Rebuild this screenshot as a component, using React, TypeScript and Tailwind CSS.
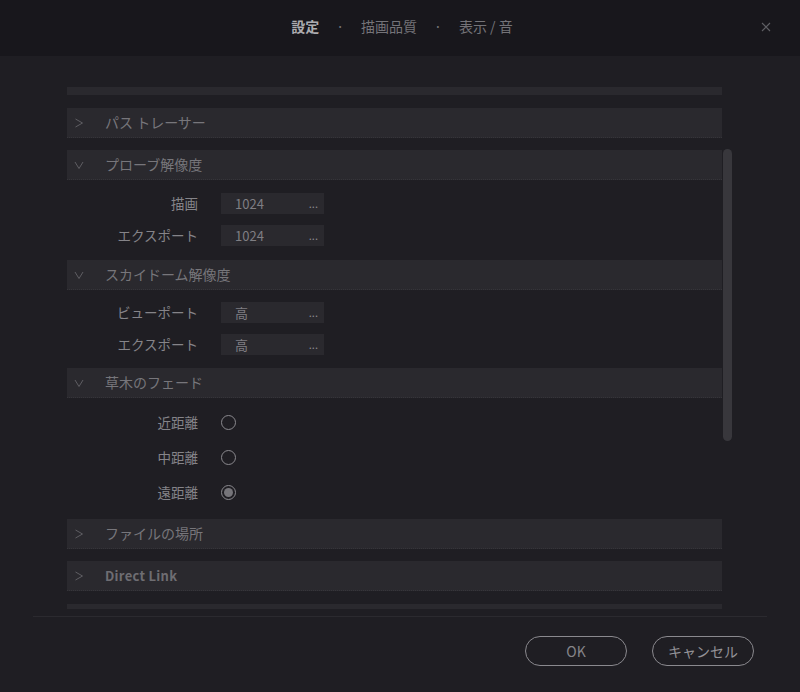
const font = { fontFamily: '"Noto Sans CJK JP", "Noto Sans", sans-serif' };

type Row = { label: string; value: string };

const Chevron = ({ open }: { open?: boolean }) => (
  <svg width="10" height="10" viewBox="0 0 10 10" className="ml-[7px] mr-[21px]">
    {open ? (
      <path d="M1 2L5 8.5L9 2" fill="none" stroke="#5f5e63" strokeWidth="1" />
    ) : (
      <path d="M1.5 1L8.5 5L1.5 9" fill="none" stroke="#5f5e63" strokeWidth="1" />
    )}
  </svg>
);

const SectionHeader = ({ title, open, bold }: { title: string; open?: boolean; bold?: boolean }) => (
  <div className="flex items-center h-[30px] w-[655px] bg-[#2a292e] border-b border-dotted border-[#36353a]">
    <Chevron open={open} />
    <span
      className={
        bold
          ? "text-[13px] font-bold text-[#6e6d72] tracking-[0.3px]"
          : "text-[14px] text-[#77767b]"
      }
    >
      {title}
    </span>
  </div>
);

const InputRows = ({ rows }: { rows: Row[] }) => (
  <div className="flex flex-col gap-[11px] mt-[13px]">
    {rows.map((r, i) => (
      <div key={i} className="flex items-center h-[21px]">
        <span className="w-[131px] text-right text-[13.5px] text-[#858489]">{r.label}</span>
        <div className="ml-[23px] w-[103px] h-[21px] bg-[#2a292e] flex items-center justify-between pl-[14px] pr-[6px]">
          <span className="text-[13px] text-[#7f7e83]">{r.value}</span>
          <span className="text-[11px] text-[#8a898e] leading-none">...</span>
        </div>
      </div>
    ))}
  </div>
);

const Radio = ({ label, checked }: { label: string; checked?: boolean }) => (
  <div className="flex items-center h-[35px]">
    <span className="w-[131px] text-right text-[13.5px] text-[#858489]">{label}</span>
    <div className="ml-[23px] w-[15px] h-[15px] rounded-full border border-[#8a898e] flex items-center justify-center">
      {checked && <div className="w-[9px] h-[9px] rounded-full bg-[#76757a]" />}
    </div>
  </div>
);

export default function App() {
  return (
    <div className="w-[800px] h-[692px] bg-[#1f1e23] flex flex-col overflow-hidden" style={font}>
      <div className="h-[56px] bg-[#18171c] flex items-center justify-center relative shrink-0 pb-[4px]">
        <div className="flex items-center text-[14px] text-[#747378] pl-[4px]">
          <span className="text-[#adacb0] font-bold">設定</span>
          <span className="mx-[17px]">·</span>
          <span>描画品質</span>
          <span className="mx-[17px]">·</span>
          <span>表示 / 音</span>
        </div>
        <svg className="absolute left-[761px] top-[22px]" width="10" height="10" viewBox="0 0 10 10">
          <path d="M1 1L9 9M9 1L1 9" stroke="#606065" strokeWidth="1.1" />
        </svg>
      </div>

      <div className="h-[553px] shrink-0 overflow-hidden relative">
        <div className="pl-[67px] pt-[31px] flex flex-col">
          <div className="w-[655px] h-[8px] bg-[#2a292e]" />
          <div className="mt-[13px]">
            <SectionHeader title="パス トレーサー" />
          </div>
          <div className="mt-[12px]">
            <SectionHeader title="プローブ解像度" open />
          </div>
          <InputRows
            rows={[
              { label: "描画", value: "1024" },
              { label: "エクスポート", value: "1024" },
            ]}
          />
          <div className="mt-[14px]">
            <SectionHeader title="スカイドーム解像度" open />
          </div>
          <div className="-mt-[1px]">
            <InputRows
              rows={[
                { label: "ビューポート", value: "高" },
                { label: "エクスポート", value: "高" },
              ]}
            />
          </div>
          <div className="mt-[13px]">
            <SectionHeader title="草木のフェード" open />
          </div>
          <div className="mt-[7px] flex flex-col">
            <Radio label="近距離" />
            <Radio label="中距離" />
            <Radio label="遠距離" checked />
          </div>
          <div className="mt-[9px]">
            <SectionHeader title="ファイルの場所" />
          </div>
          <div className="mt-[12px]">
            <SectionHeader title="Direct Link" bold />
          </div>
          <div className="mt-[13px] w-[655px] h-[8px] bg-[#2a292e]" />
        </div>
        <div className="absolute left-[723px] top-[93px] w-[9px] h-[292px] rounded-full bg-[#38373c]" />
      </div>

      <div className="mx-[33px] mt-[7px] h-px bg-[#2b2a2f]" />
      <div className="flex justify-end gap-[25px] pr-[46px] mt-[19px]">
        <button className="w-[102px] h-[30px] rounded-full border border-[#8a898e] text-[14px] text-[#858489]">
          OK
        </button>
        <button className="w-[102px] h-[30px] rounded-full border border-[#8a898e] text-[14px] text-[#939297]">
          キャンセル
        </button>
      </div>
    </div>
  );
}
